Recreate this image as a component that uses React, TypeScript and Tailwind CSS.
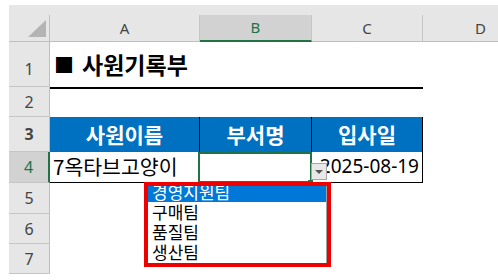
import React from "react";

const KR = "font-['Noto_Sans_CJK_KR','Noto_Sans',sans-serif]";
const UI = "font-['Noto_Sans','Noto_Sans_CJK_KR',sans-serif]";

function RowHead({ n, h, sel }: { n: number; h: string; sel?: boolean }) {
  return (
    <div
      className={`${h} w-[41px] shrink-0 flex items-center justify-center border-b border-[#c6c6c6] text-[16px] leading-none ${UI} ${
        sel
          ? "bg-[#d2d2d2] text-[#217346] border-r-2 border-r-[#217346]"
          : "bg-[#e6e6e6] text-[#444] border-r border-r-[#bfbfbf]"
      }`}
    >
      {n}
    </div>
  );
}

function ColHead({ label, w, sel }: { label: string; w: string; sel?: boolean }) {
  return (
    <div className={`${w} shrink-0 flex flex-col h-[37px]`}>
      <div className="h-[10px] bg-[#e6e6e6]" />
      <div
        className={`h-[27px] flex items-center justify-center border-r border-r-[#c6c6c6] text-[15px] leading-none ${UI} ${
          sel
            ? "bg-[#d2d2d2] text-[#217346] border-b-2 border-b-[#217346]"
            : "bg-[#e6e6e6] text-[#444] border-b border-b-[#bfbfbf]"
        }`}
      >
        {label}
      </div>
    </div>
  );
}

export default function App() {
  return (
    <div className="relative w-[498px] h-[280px] overflow-hidden bg-white pt-[5px] pl-[9px]">
      {/* column header */}
      <div className="flex">
        <div className="w-[41px] shrink-0 flex flex-col h-[37px]">
          <div className="h-[10px] bg-[#e6e6e6]" />
          <div className="h-[27px] bg-[#e6e6e6] border-r border-r-[#bfbfbf] border-b border-b-[#bfbfbf] flex items-end justify-end pr-[3px] pb-[4px]">
            <svg width="18" height="17" viewBox="0 0 18 17">
              <polygon points="0,17 18,0 18,17" fill="#b4b4b4" />
            </svg>
          </div>
        </div>
        <ColHead label="A" w="w-[150px]" />
        <ColHead label="B" w="w-[112px]" sel />
        <ColHead label="C" w="w-[111px]" />
        <div className="flex-1 flex flex-col h-[37px]">
          <div className="h-[10px] bg-[#e6e6e6]" />
          <div className={`h-[27px] flex items-center pl-[52px] bg-[#e6e6e6] border-b border-b-[#bfbfbf] text-[15px] leading-none text-[#444] ${UI}`}>
            D
          </div>
        </div>
      </div>

      {/* row 1 */}
      <div className="flex h-[45px]">
        <div className="h-[45px] w-[41px] shrink-0 flex items-end justify-center pb-[9px] bg-[#e6e6e6] border-r border-r-[#bfbfbf] border-b border-[#c6c6c6] text-[16px] leading-none text-[#444] font-['Noto_Sans',sans-serif]">
          1
        </div>
        <div className={`w-[373px] flex items-center pl-[4px] font-bold text-black ${KR}`}>
          <span className="text-[20px] leading-none mr-[8px]">■</span>
          <span className="text-[23px] leading-none">사원기록부</span>
        </div>
      </div>

      {/* row 2 */}
      <div className="flex h-[30px]">
        <RowHead n={2} h="h-[30px]" />
        <div className="w-[373px] border-t-2 border-black" />
      </div>

      {/* row 3 */}
      <div className={`flex h-[35px] text-white font-bold text-[21px] leading-none ${KR}`}>
        <RowHead n={3} h="h-[35px]" />
        <div className="w-[150px] bg-[#0070c0] border-r border-black flex items-center justify-center">사원이름</div>
        <div className="w-[112px] bg-[#0070c0] border-r border-black flex items-center justify-center">부서명</div>
        <div className="w-[111px] bg-[#0070c0] border-r border-black flex items-center justify-center">입사일</div>
      </div>

      {/* row 4 */}
      <div className="flex h-[31px] text-black">
        <RowHead n={4} h="h-[31px]" sel />
        <div className={`w-[148px] border-b border-black flex items-center pl-[3px] pb-[2px] text-[20.5px] leading-none whitespace-nowrap ${KR}`}>
          7옥타브고양이
        </div>
        <div className="w-[114px] border-2 border-[#217346]" />
        <div className={`w-[111px] border-b border-r border-black flex items-center justify-end pr-[3px] pb-[1px] text-[19px] ${UI}`}>
          2025-08-19
        </div>
      </div>

      {/* rows 5-7 */}
      <div className="flex h-[31px]">
        <RowHead n={5} h="h-[31px]" />
      </div>
      <div className="flex h-[30px]">
        <RowHead n={6} h="h-[30px]" />
      </div>
      <div className="flex h-[30px]">
        <RowHead n={7} h="h-[30px]" />
      </div>

      {/* fill handle */}
      <div className="absolute left-[308px] top-[180px] w-[5px] h-[5px] bg-[#217346]" />

      {/* dropdown button */}
      <div className="absolute left-[311px] top-[163px] w-[16px] h-[17px] bg-[#e8e8e8] border border-[#a6a6a6] flex items-center justify-center">
        <svg width="8" height="4" viewBox="0 0 8 4">
          <polygon points="0,0 8,0 4,4" fill="#555" />
        </svg>
      </div>

      {/* dropdown list */}
      <div className="absolute left-[144px] top-[182px] w-[187px] h-[85px] border-4 border-[#ee0000] bg-white">
        <div className="w-full h-full border-r border-r-[#a0a0a0] overflow-hidden">
          <div className={`-mt-[4px] text-[17px] leading-[20px] text-black ${KR}`}>
            <div className="h-[20px] pl-[4px] bg-[#0078d7] text-white">경영지원팀</div>
            <div className="h-[20px] pl-[4px]">구매팀</div>
            <div className="h-[20px] pl-[4px]">품질팀</div>
            <div className="h-[20px] pl-[4px]">생산팀</div>
          </div>
        </div>
      </div>
    </div>
  );
}
